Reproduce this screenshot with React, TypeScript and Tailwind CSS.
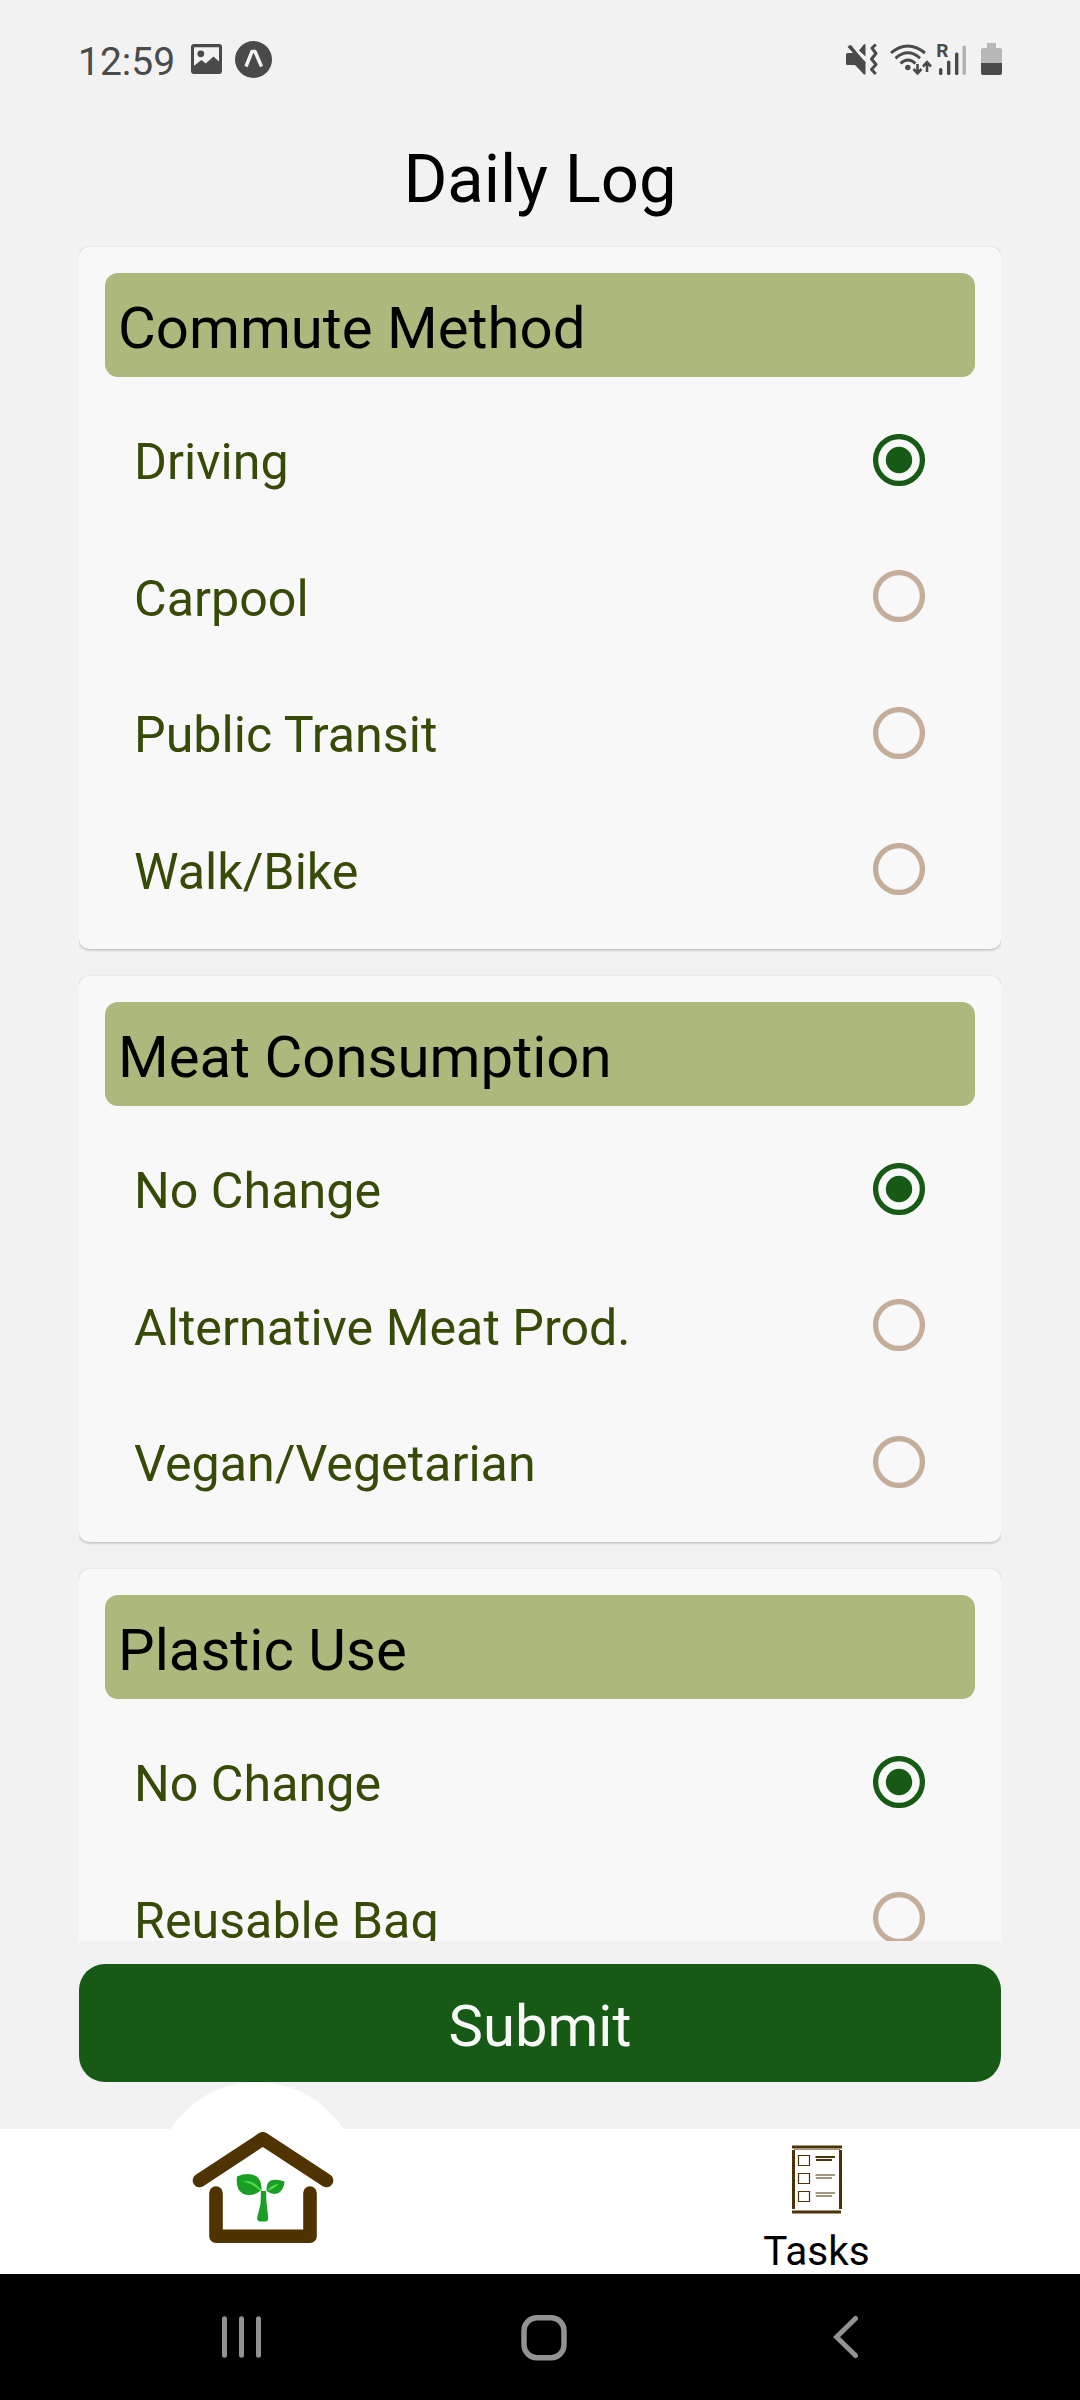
import { useState } from "react";

const sections = [
  {
    title: "Commute Method",
    options: ["Driving", "Carpool", "Public Transit", "Walk/Bike"],
  },
  {
    title: "Meat Consumption",
    options: ["No Change", "Alternative Meat Prod.", "Vegan/Vegetarian"],
  },
  {
    title: "Plastic Use",
    options: ["No Change", "Reusable Bag"],
  },
];

function StatusBar() {
  return (
    <div className="flex h-[120px] shrink-0 justify-between pl-[78px] pr-[78px] text-[#4a4a4a]">
      <div className="flex pt-[38px]">
        <span className="w-[113px] pt-px text-[39px] leading-[46px]">12:59</span>
        {/* gallery */}
        <svg width="31" height="30" viewBox="0 0 31 30" className="mt-[6px]">
          <path
            fill="currentColor"
            fillRule="evenodd"
            d="M3 0h25a3 3 0 0 1 3 3v24a3 3 0 0 1-3 3H3a3 3 0 0 1-3-3V3a3 3 0 0 1 3-3zM3 3.2v18.6L10.5 16l4.2 3.6L22.5 12.5l5.5 5V3.2z"
          />
          <circle cx="9.8" cy="9.8" r="3.4" fill="currentColor" />
        </svg>
        {/* expo */}
        <svg width="37" height="37" viewBox="0 0 37 37" className="ml-[13px] mt-[3px]">
          <circle cx="18.5" cy="18.5" r="18.5" fill="currentColor" />
          <path
            d="M11 25.500L17 10.500h3l6.500 15"
            fill="none"
            stroke="#f2f2f2"
            strokeWidth="3.4"
            strokeLinejoin="round"
          />
        </svg>
      </div>
      <div className="flex pt-[42px]">
        {/* muted speaker with vibration waves */}
        <svg width="32" height="34" viewBox="0 0 32 34">
          <path d="M0 12.500q0-1.500 1.500-1.500H7L3 4.500 5 3l14.500 18v11.500H18L9 23H1.500Q0 23 0 21.500z" fill="currentColor" />
          <path d="M2.500 4L19 21.500" stroke="currentColor" strokeWidth="2.6" />
          <path d="M13 8.500L18 2.300h1.500V14.500z" fill="currentColor" />
          <path
            d="M29.800 2.500L26 6l4 5.500-4.500 5.500L30 22.500l-4.500 5 4.300 4.500"
            fill="none"
            stroke="currentColor"
            strokeWidth="3"
            strokeLinejoin="round"
          />
        </svg>
        {/* wifi */}
        <svg width="42" height="34" viewBox="0 0 42 34" className="ml-[12px]">
          <g fill="none" stroke="currentColor" strokeWidth="2.9">
            <path d="M1 11q16.500-14 34 0" />
            <path d="M5.500 16.300q12.500-11 24.500 0" />
            <path d="M10.500 21.500q7.500-7 15 0" />
            <path d="M27.500 22v9M23.500 27l4 4.300 4-4.300M37 30V20.500M33 24.500l4-4.300 4 4.300" strokeWidth="2.6" />
          </g>
          <circle cx="17.8" cy="25.5" r="2.7" fill="currentColor" />
        </svg>
        {/* roaming signal */}
        <svg width="31" height="34" viewBox="-1 0 31 34" className="ml-[4px] mr-[2px] overflow-visible">
          <text x="-0.8" y="15" fontSize="19" fontWeight="700" fill="currentColor">
            R
          </text>
          <rect x="2" y="26" width="3.4" height="7" rx="1.5" fill="currentColor" />
          <rect x="10" y="18.5" width="3.4" height="14.5" rx="1.5" fill="currentColor" />
          <rect x="18" y="10.5" width="3.4" height="22.5" rx="1.5" fill="currentColor" />
          <rect x="25.5" y="3.5" width="3.4" height="29.5" rx="1.5" fill="#b0b0b0" />
        </svg>
        {/* battery */}
        <svg width="21" height="34" viewBox="0 0 21 34" className="ml-[12px]">
          <path d="M6 1h9v5h4a2 2 0 0 1 2 2v13H0V8a2 2 0 0 1 2-2h4z" fill="#b8b8b8" />
          <path d="M0 21h21v10a2 2 0 0 1-2 2H2a2 2 0 0 1-2-2z" fill="currentColor" />
        </svg>
      </div>
    </div>
  );
}

function Radio({ checked }: { checked: boolean }) {
  const color = checked ? "#175a16" : "#c4ae9a";

  return (
    <svg width="52" height="52" viewBox="0 0 52 52">
      <circle cx="26" cy="26" r="23.4" fill="none" stroke={color} strokeWidth="5.3" />
      {checked && <circle cx="26" cy="26" r="13.2" fill={color} />}
    </svg>
  );
}

function Section({ title, options }: { title: string; options: string[] }) {
  const [selected, setSelected] = useState(0);

  return (
    <section className="shrink-0 rounded-[10px] bg-[#f8f8f8] px-[26px] pt-[26px] pb-[12px] shadow-[0_1px_3px_rgba(0,0,0,0.28)]">
      <h2 className="mb-[14.25px] h-[104px] rounded-[13px] bg-[#abb97d] pl-[13px] pt-[3px] text-[58.1px] leading-[104px] text-black">
        {title}
      </h2>
      {options.map((option, index) => (
        <button
          key={option}
          onClick={() => setSelected(index)}
          className="flex h-[136.5px] w-full items-center justify-between pl-[29px] pr-[50px] text-left"
        >
          <span className="pt-[5px] text-[50.2px] leading-[60px] text-[#374a08]">{option}</span>
          <Radio checked={selected === index} />
        </button>
      ))}
    </section>
  );
}

function HomeIcon() {
  return (
    <svg width="142" height="112" viewBox="0 0 142 112">
      <g fill="none" stroke="#4f3300" strokeWidth="13.6" strokeLinecap="round" strokeLinejoin="round">
        <path d="M7.500 48.500L70.800 6.800 134.500 48.500" />
        <path d="M24 61v43.200h94V61" />
      </g>
      <path d="M69 59h5l.5 11 1.700 15.500q.2 4-3 4h-5q-3.300 0-3-4L68.500 72z" fill="#1b9e26" />
      <path d="M45 44.500q11-4.500 19-.5 6 4 5.500 14-10 8-19 3.500Q43.500 57 45 44.500z" fill="#1b9e26" />
      <path d="M51 49.200q11.500-1.300 18.500 9.300l-1.300.5Q61 51.800 51 49.200z" fill="#4be04a" />
      <path d="M92.500 49.500q-7.500-3-14-1-4.500 2.500-4 10.500 7 5 13 1.500 4.500-4 5-11z" fill="#1b9e26" />
      <path d="M87 52q-8.500 1-12 7 5.500-1.500 12-7z" fill="#4be04a" />
    </svg>
  );
}

function TasksIcon() {
  return (
    <svg width="50" height="70" viewBox="0 0 50 70" stroke="#4b3209" fill="none" className="shrink-0">
      <path d="M0 2h50M0 67h49" strokeWidth="3" />
      <path d="M1.500 5v59M48.500 5v59" strokeWidth="3" />
      <path d="M2 4.500h46" strokeWidth="1" stroke="#a3926f" />
      {[0, 18, 36].map((y) => (
        <g key={y}>
          <path d={`M6.500 ${y + 10.5}h11v10h-11z`} strokeWidth="1.2" />
          <path d={`M23.500 ${y + 12}H43M24 ${y + 15}H40`} strokeWidth={y === 0 ? 1.9 : 1.1} />
        </g>
      ))}
    </svg>
  );
}

function TabBar() {
  return (
    <nav className="relative z-0 flex h-[145px] shrink-0 bg-white">
      <span className="absolute -top-[47px] left-[154px] -z-10 size-[206px] rounded-full bg-white" />
      <button className="flex w-[526px] justify-center pt-[3px]">
        <HomeIcon />
      </button>
      <button className="ml-[27px] flex flex-1 flex-col items-center pt-[16px]">
        <TasksIcon />
        <span className="mt-[13px] text-[40.5px] leading-[46px] text-black">Tasks</span>
      </button>
    </nav>
  );
}

function SystemNav() {
  return (
    <div className="relative z-10 flex h-[126px] shrink-0 bg-black pl-[221px] pt-[41px]">
      <svg width="42" height="46" viewBox="0 0 42 46" stroke="#929292" strokeWidth="5" strokeLinecap="round">
        <path d="M3.500 3.800v36.400M20.500 3.800v36.400M37.500 3.800v36.400" />
      </svg>
      <svg width="46" height="46" viewBox="0 0 46 46" fill="none" stroke="#929292" strokeWidth="5.5" className="ml-[258px]">
        <rect x="3" y="2.750" width="40" height="40" rx="13" />
      </svg>
      <svg width="26" height="46" viewBox="0 0 26 46" fill="none" stroke="#929292" strokeWidth="5" strokeLinecap="round" className="ml-[266px]">
        <path d="M22.500 3.500L3.500 22l19 18.500" />
      </svg>
    </div>
  );
}

export default function App() {
  return (
    <div className="flex h-[2400px] w-[1080px] flex-col overflow-hidden bg-[#f2f2f2] font-['Roboto',sans-serif]">
      <StatusBar />
      <h1 className="h-[126px] shrink-0 text-center text-[67px] leading-[118px] text-black">Daily Log</h1>
      <main className="mx-[79px] flex h-[1695px] shrink-0 flex-col gap-[27px] overflow-hidden pt-px">
        {sections.map((section) => (
          <Section key={section.title} {...section} />
        ))}
      </main>
      <div className="h-[188px] shrink-0 px-[79px] pt-[23px]">
        <button className="h-[118px] w-full rounded-[26px] bg-[#175a16] pt-[6px] text-[58px] leading-[112px] text-[#f8f8f8]">
          Submit
        </button>
      </div>
      <TabBar />
      <SystemNav />
    </div>
  );
}
